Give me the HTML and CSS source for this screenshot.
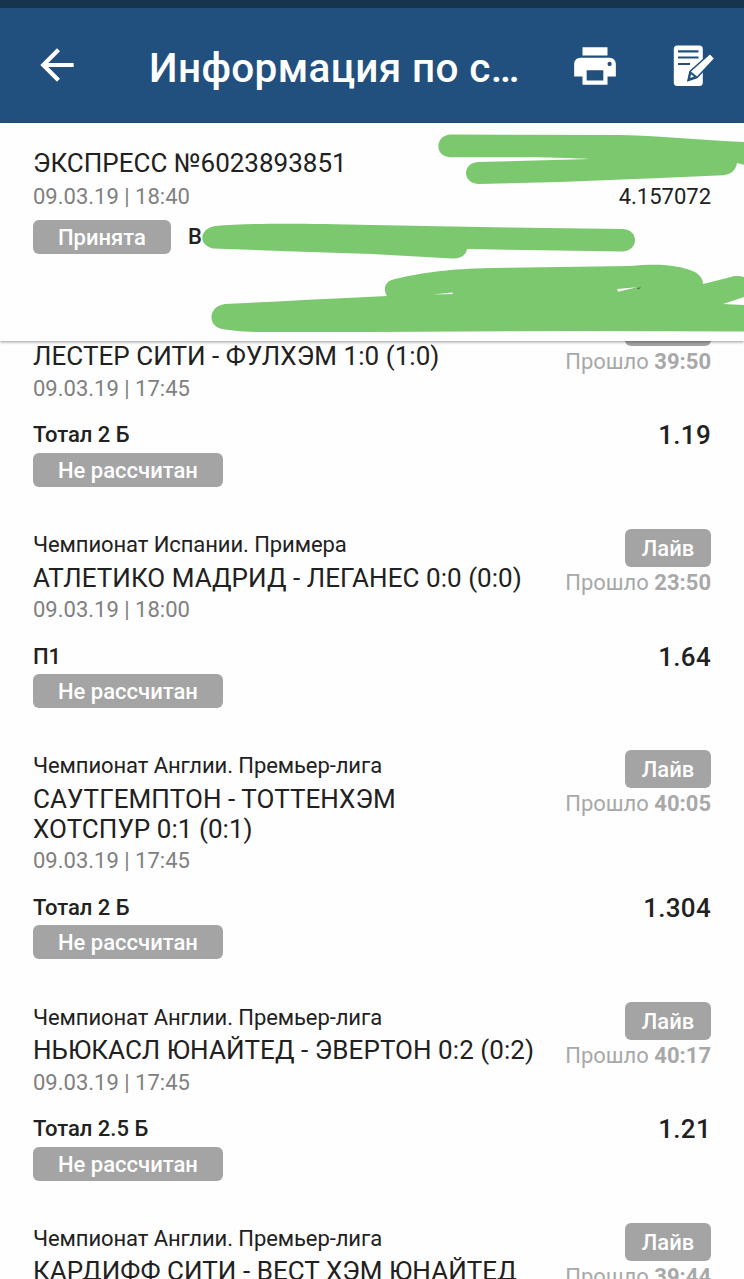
FILE: index.html
```html
<!DOCTYPE html>
<html lang="ru">
<head>
    <meta charset="UTF-8">
    <title>Информация по ставке</title>
    <link rel="stylesheet" href="styles.css">
</head>
<body>
<div class="statusbar"></div>
<header class="topbar">
    <svg class="icon back" viewBox="0 0 24 24"><path d="M20 11H7.83l5.59-5.59L12 4l-8 8 8 8 1.41-1.41L7.83 13H20v-2z"/></svg>
    <h1 class="title">Информация по с…</h1>
    <svg class="icon print" viewBox="0 0 24 24"><path d="M19 8H5c-1.66 0-3 1.34-3 3v6h4v4h12v-4h4v-6c0-1.66-1.34-3-3-3zm-3 11H8v-5h8v5zm3-7c-.55 0-1-.45-1-1s.45-1 1-1 1 .45 1 1-.45 1-1 1zm-1-9H6v4h12V3z"/></svg>
    <svg class="icon note" viewBox="0 0 42 42">
        <rect x="0.8" y="0.5" width="29" height="40.500" rx="3.5"/>
        <path class="line" d="M5 6.300H25.5M5 12.500H25.5M5 19H17"/>
        <path class="pen" d="M37 8.500L41.800 13.500L24 32.500L15 35.500L17 26.500Z"/>
        <path class="tip" d="M17.500 27.500L23 32L15.800 34.500Z"/>
    </svg>
</header>
<section class="summary">
    <div class="number">ЭКСПРЕСС №6023893851</div>
    <div class="row">
        <span class="date">09.03.19 | 18:40</span>
        <span class="total">4.157072</span>
    </div>
    <div class="state">
        <span class="badge">Принята</span>
        <b class="label">В</b>
    </div>
    <svg class="marker" viewBox="0 123 744 218">
        <path d="M450 134.500L620 135C665 136 700 140 744 142V164.700L737 163C736 170 731 174.500 723 175.300L660 178L560 182L478 184C462 183 462 163 478 162L590 159C560 157.500 530 157 450 157.200C434 156 435 136 450 134.500Z"/>
        <path d="M215 226C250 223 300 223.500 372 225L480 227L623 229C639 230 639 250 623 251.500L467 249C466 255 461 259 452 258.500L372 254L280 251L213 248.500C198 245 199 229 215 226Z"/>
        <path d="M225 304C290 301 340 298 387 296C383 290 384 281 395 279C425 272 450 269 490 268L560 267L630 266C655 264 672 264 690 270C699 273 703 278 703 284L729 277.500Q737 275 744 277V297L723 304L744 305V331.500L580 331L372 332H260C240 332 230 330 222 329C207 326 208 306 225 304Z"/>
        <path class="gap" d="M433 294.500L452 292.500L453 294Z"/>
        <path class="gap" d="M617 289L637 287.300L618 291.800Z"/>
        <path class="dot" d="M636.500 288L641 287.600L638.500 289Z"/>
    </svg>
</section>
<main class="list">
    <article class="event cut">
        <div class="head">
            <div class="info">
                <div class="league"></div>
                <div class="teams">ЛЕСТЕР СИТИ - ФУЛХЭМ 1:0 (1:0)</div>
                <div class="date">09.03.19 | 17:45</div>
            </div>
            <div class="side">
                <span class="live"></span>
                <span class="passed">Прошло <b>39:50</b></span>
            </div>
        </div>
        <div class="bet"><b class="label">Тотал 2 Б</b><b class="coef">1.19</b></div>
        <span class="badge">Не рассчитан</span>
    </article>
    <article class="event">
        <div class="head">
            <div class="info">
                <div class="league">Чемпионат Испании. Примера</div>
                <div class="teams">АТЛЕТИКО МАДРИД - ЛЕГАНЕС 0:0 (0:0)</div>
                <div class="date">09.03.19 | 18:00</div>
            </div>
            <div class="side">
                <span class="live">Лайв</span>
                <span class="passed">Прошло <b>23:50</b></span>
            </div>
        </div>
        <div class="bet"><b class="label">П1</b><b class="coef">1.64</b></div>
        <span class="badge">Не рассчитан</span>
    </article>
    <article class="event">
        <div class="head">
            <div class="info">
                <div class="league">Чемпионат Англии. Премьер-лига</div>
                <div class="teams">САУТГЕМПТОН - ТОТТЕНХЭМ<br>ХОТСПУР 0:1 (0:1)</div>
                <div class="date">09.03.19 | 17:45</div>
            </div>
            <div class="side">
                <span class="live">Лайв</span>
                <span class="passed">Прошло <b>40:05</b></span>
            </div>
        </div>
        <div class="bet"><b class="label">Тотал 2 Б</b><b class="coef">1.304</b></div>
        <span class="badge">Не рассчитан</span>
    </article>
    <article class="event">
        <div class="head">
            <div class="info">
                <div class="league">Чемпионат Англии. Премьер-лига</div>
                <div class="teams">НЬЮКАСЛ ЮНАЙТЕД - ЭВЕРТОН 0:2 (0:2)</div>
                <div class="date">09.03.19 | 17:45</div>
            </div>
            <div class="side">
                <span class="live">Лайв</span>
                <span class="passed">Прошло <b>40:17</b></span>
            </div>
        </div>
        <div class="bet"><b class="label">Тотал 2.5 Б</b><b class="coef">1.21</b></div>
        <span class="badge">Не рассчитан</span>
    </article>
    <article class="event">
        <div class="head">
            <div class="info">
                <div class="league">Чемпионат Англии. Премьер-лига</div>
                <div class="teams">КАРДИФФ СИТИ - ВЕСТ ХЭМ ЮНАЙТЕД</div>
            </div>
            <div class="side">
                <span class="live">Лайв</span>
                <span class="passed">Прошло <b>39:44</b></span>
            </div>
        </div>
    </article>
</main>
</body>
</html>
```
FILE: styles.css
```css
*{
    box-sizing: border-box;
}
body{
    margin: 0;
    height: 1279px;
    overflow: hidden;
    display: flex;
    flex-direction: column;
    background-color: #fefefe;
    color: #212121;
    font: 22px/26px Roboto, sans-serif;
}
b{
    font-weight: 500;
}
.statusbar{
    flex: none;
    height: 8px;
    background-color: #17344f;
}
.topbar{
    flex: none;
    display: flex;
    align-items: center;
    height: 115px;
    padding: 0 29px 0 32px;
    background-color: #21507f;
    color: #fff;
}
.icon{
    flex: none;
    width: 50px;
    height: 50px;
    fill: #fff;
}
.back{
    margin-bottom: 2px;
}
.title{
    flex: 1;
    margin: 5px 0 0 67px;
    font-size: 40.5px;
    line-height: 48px;
    font-weight: 500;
    letter-spacing: .35px;
    white-space: nowrap;
}
.note{
    width: 42px;
    height: 42px;
    margin-left: 53px;
}
.note .line{
    fill: none;
    stroke: #21507f;
    stroke-width: 2.2;
}
.note .pen{
    stroke: #21507f;
    stroke-width: 1.5;
}
.note .tip{
    fill: none;
    stroke: #21507f;
    stroke-width: 2;
}
.summary{
    flex: none;
    position: relative;
    z-index: 1;
    height: 218px;
    padding: 25px 33px 0;
    background-color: #fefefe;
    box-shadow: 0 1px 3px rgba(0,0,0,.4);
}
.marker{
    position: absolute;
    left: 0;
    top: 0;
    width: 744px;
    height: 218px;
    fill: #7bc86f;
}
.marker .gap{
    fill: #fefefe;
}
.marker .dot{
    fill: #2f5a2b;
}
.number{
    font-size: 26px;
    line-height: 30px;
}
.row{
    display: flex;
    justify-content: space-between;
    margin-top: 6px;
}
.date{
    color: #808080;
}
.state{
    display: flex;
    gap: 17px;
    margin-top: 10px;
}
.state .label{
    line-height: 33px;
}
.badge, .live{
    display: block;
    width: max-content;
    height: 34px;
    padding: 0 25px;
    border-radius: 6px;
    background-color: #a4a4a4;
    color: #fff;
    font-weight: 500;
    line-height: 35px;
}
.list{
    flex: 1;
    min-height: 0;
    overflow: hidden;
    padding: 0 33px;
}
.event{
    padding-bottom: 42.2px;
}
.cut{
    margin-top: -33px;
}
.head{
    display: flex;
    justify-content: space-between;
}
.info{
    width: 510px;
    padding-top: 3px;
}
.league{
    height: 26px;
    letter-spacing: -.08px;
}
.teams{
    margin: 4.4px 0 4.6px;
    font-size: 26px;
    line-height: 30px;
    letter-spacing: .05px;
}
.side{
    display: flex;
    flex-direction: column;
    align-items: flex-end;
    white-space: nowrap;
}
.live{
    width: 86px;
    height: 38px;
    padding: 0;
    line-height: 39px;
    text-align: center;
}
.passed{
    margin-top: 3px;
    color: #a8a8a8;
}
.passed b{
    font-weight: 700;
}
.bet{
    display: flex;
    justify-content: space-between;
    align-items: center;
    height: 30px;
    margin: 18px 0 3px;
}
.bet .label{
    padding-top: 1px;
}
.coef{
    padding-top: 1px;
    font-size: 26px;
    letter-spacing: .3px;
}
```
